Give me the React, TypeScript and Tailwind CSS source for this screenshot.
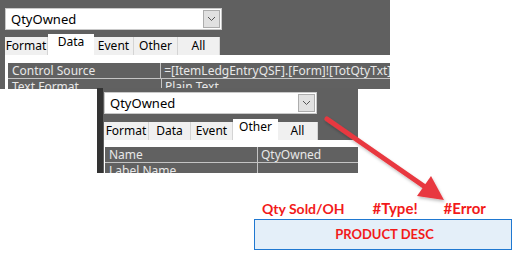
const ui = { fontFamily: '"Noto Sans", "DejaVu Sans", sans-serif' }

function Combo({ value, w }: { value: string; w: string }) {
  return (
    <div className={`${w} h-[22px] bg-white border border-[#c9c9c9] flex items-center justify-between pl-[5px] pr-[1px]`}>
      <span className="text-[13px] leading-none text-black">{value}</span>
      <div className="w-[17px] h-[18px] bg-[#e1e1e1] border border-[#adadad] flex items-center justify-center">
        <svg width="9" height="6" viewBox="0 0 9 6">
          <path d="M1 1 L4.5 4.5 L8 1" fill="none" stroke="#555" strokeWidth="1" />
        </svg>
      </div>
    </div>
  )
}

function Tabs({ active, widths }: { active: string; widths: number[] }) {
  const names = ['Format', 'Data', 'Event', 'Other', 'All']
  return (
    <div className="flex items-end h-[21px]">
      {names.map((n, i) => {
        const on = n === active
        return (
          <div
            key={n}
            style={{ width: widths[i] }}
            className={
              on
                ? 'h-[21px] bg-white flex justify-center pt-[1px] text-[12px] text-black'
                : 'h-[18px] bg-[#f0f0f0] border-r border-[#d4d4d4] flex justify-center pt-[2px] text-[12px] text-black'
            }
          >
            <span className="leading-[14px]">{n}</span>
          </div>
        )
      })}
    </div>
  )
}

function Row({ label, value, col }: { label: string; value: string; col: string }) {
  return (
    <div className="flex h-[16px] bg-[#616161] border-b border-[#c4c4c4] text-[12px] leading-[15px] text-[#e8e8e8]">
      <div className={`${col} pl-[4px] border-r border-[#c4c4c4] whitespace-nowrap overflow-hidden`}>{label}</div>
      <div className="pl-[3px] whitespace-nowrap overflow-hidden">{value}</div>
    </div>
  )
}

export default function App() {
  return (
    <div className="relative w-[526px] h-[262px] bg-white overflow-hidden" style={ui}>
      {/* property sheet 1 */}
      <div className="w-[390px] h-[89px] bg-[#606060] pt-[8px] pl-[5px] overflow-hidden">
        <Combo value="QtyOwned" w="w-[217px]" />
        <div className="mt-[4px]">
          <Tabs active="Data" widths={[43, 46, 40, 44, 42]} />
        </div>
        <div className="bg-white pt-[8px] pl-[3px]">
          <Row label="Control Source" value="=[ItemLedgEntryQSF].[Form]![TotQtyTxt]" col="w-[154px]" />
          <Row label="Text Format" value="Plain Text" col="w-[154px]" />
        </div>
      </div>

      {/* property sheet 2, over the first */}
      <div className="absolute left-[97px] top-[88px] w-[261px] h-[85px] bg-[#606060] border-l-[6px] border-[#333333] overflow-hidden pt-[4px] pl-[1px]">
        <Combo value="QtyOwned" w="w-[213px]" />
        <div className="mt-[5px]">
          <Tabs active="Other" widths={[45, 42, 42, 45, 40]} />
        </div>
        <div className="bg-white pt-[7px] pl-[1px]">
          <Row label="Name" value="QtyOwned" col="w-[153px]" />
          <Row label="Label Name" value="" col="w-[153px]" />
        </div>
      </div>

      {/* labels and box */}
      <div className="absolute left-[254px] top-[198px] w-[258px]" style={{ fontFamily: 'Lato, "Open Sans", sans-serif' }}>
        <div className="flex items-end h-[18px] font-bold text-[#f21a1a]">
          <span className="ml-[8px] text-[14px] leading-none">Qty Sold/OH</span>
          <span className="ml-[28px] text-[15px] leading-none">#Type!</span>
          <span className="ml-[26px] text-[15px] leading-none">#Error</span>
        </div>
        <div className="mt-[3px] h-[31px] bg-[#e4eff9] border border-[#1f78d1] flex items-center justify-center">
          <span className="font-bold text-[13px] text-[#f21a1a] pl-[3px]">PRODUCT DESC</span>
        </div>
      </div>

      {/* red arrow */}
      <svg className="absolute inset-0 pointer-events-none" width="526" height="262" viewBox="0 0 526 262">
        <defs>
          <filter id="sh" x="-20%" y="-20%" width="140%" height="140%">
            <feDropShadow dx="1" dy="2" stdDeviation="1.5" floodColor="#000" floodOpacity="0.25" />
          </filter>
        </defs>
        <g filter="url(#sh)" fill="#e8393f">
          <line x1="327" y1="119" x2="428" y2="189" stroke="#e8393f" strokeWidth="5" strokeLinecap="round" />
          <polygon points="444,200 417,196 431,176" />
        </g>
      </svg>
    </div>
  )
}
